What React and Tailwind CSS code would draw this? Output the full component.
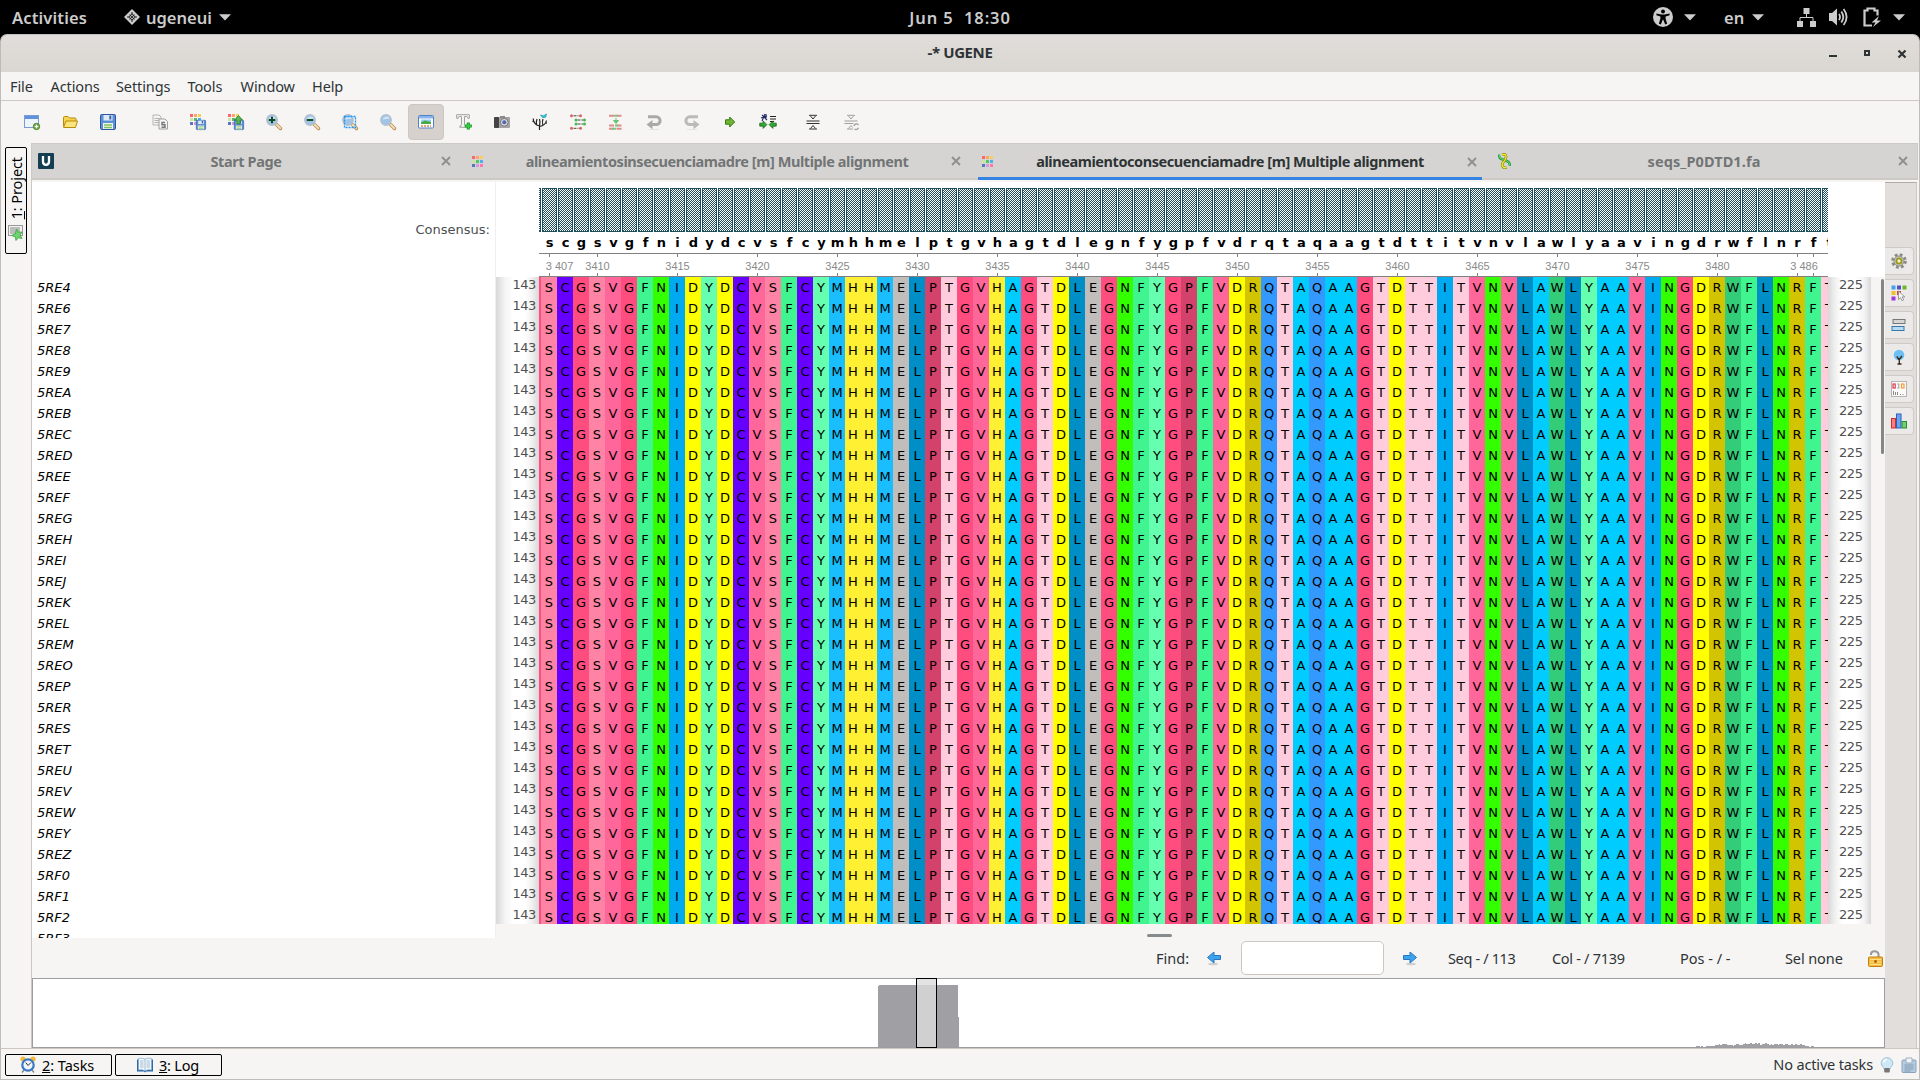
import React from "react";

const UI = "font-['Noto_Sans','Open_Sans',sans-serif]";
const MONO = "font-['DejaVu_Sans',sans-serif]";

const SEQ = "SCGSVGFNIDYDCVSFCYMHHMELPTGVHAGTDLEGNFYGPFVDRQTAQAAGTDTTITVNVLAWLYAAVINGDRWFLNRF".split("");
const NAMES = "5RE4 5RE6 5RE7 5RE8 5RE9 5REA 5REB 5REC 5RED 5REE 5REF 5REG 5REH 5REI 5REJ 5REK 5REL 5REM 5REO 5REP 5RER 5RES 5RET 5REU 5REV 5REW 5REY 5REZ 5RF0 5RF1 5RF2 5RF3".split(" ");
const ROWS = NAMES.slice(0, 31);

const COLORS = {
  S: "bg-[#ff83a4]", C: "bg-[#6600ff]", G: "bg-[#ff4d80]", V: "bg-[#ff6699]", F: "bg-[#40f490]",
  N: "bg-[#33ff00]", I: "bg-[#00aaf0]", D: "bg-[#ffff00]", Y: "bg-[#66ffb0]", M: "bg-[#1abeff]",
  H: "bg-[#fff033]", E: "bg-[#c0bdbb]", L: "bg-[#008ec7]", P: "bg-[#d2426b]", T: "bg-[#ffccdd]",
  A: "bg-[#00ccff]", R: "bg-[#d2c400]", Q: "bg-[#3399ff]", W: "bg-[#33cc78]",
};

function Caret() {
  return (
    <svg width="12" height="7" viewBox="0 0 12 7" className="shrink-0">
      <path d="M0 0.3h12L6 6.6z" fill="#ccc" />
    </svg>
  );
}

function TopBar() {
  return (
    <div className={`grid h-[34px] shrink-0 grid-cols-[1fr_auto_1fr] items-center bg-black text-[16.5px] leading-[30px] font-semibold text-[#ccc] ${UI}`}>
      <div className="flex items-center pl-3">
        <span className="w-[112px] pt-px tracking-[0.15px]">Activities</span>
        <svg width="16" height="16" viewBox="0 0 16 16">
          <path d="M8 0l8 8-8 8-8-8z" fill="#ccc" />
          <path d="M8 3.2v9.6M3.2 8h9.6M5.6 5.6l4.8 4.8M10.4 5.6l-4.8 4.8" stroke="#000" strokeWidth="1.1" />
          <path d="M8 5.2L10.8 8 8 10.8 5.2 8z" fill="#ccc" stroke="#000" strokeWidth=".7" />
          <circle cx="8" cy="8" r="1" fill="#000" />
        </svg>
        <span className="ml-1.5 w-[73px] pt-px tracking-[0px]">ugeneui</span>
        <Caret />
      </div>
      <span className="pt-px tracking-[0.9px] whitespace-pre">Jun 5  18:30</span>
      <div className="flex items-center justify-end pr-[15px]">
        <svg width="20" height="20" viewBox="0 0 20 20">
          <circle cx="10" cy="10" r="10" fill="#ccc" />
          <circle cx="10" cy="4.4" r="2" fill="#000" />
          <path d="M3.4 6.4l5 1h3.2l5-1v1.9l-4 1.1v2l1.5 5.4-1.9.6-1.9-4.7h-.6l-1.9 4.7-1.9-.6 1.5-5.4v-2l-4-1.1z" fill="#000" />
        </svg>
        <span className="w-[11px]" />
        <Caret />
        <span className="ml-[28px] w-[28px] pt-px">en</span>
        <Caret />
        <span className="w-[33px]" />
        <svg width="19" height="19" viewBox="0 0 19 19">
          <path d="M6.5 0h6v6h-6zM0 13h6v6H0zM13 13h6v6h-6z" fill="#ccc" />
          <path d="M9.5 6v4M3 13v-3.5h13V13" stroke="#ccc" fill="none" />
        </svg>
        <svg width="19" height="18" viewBox="0 0 19 18" className="ml-[13px]">
          <path d="M0 5h3l5-4.5v17L3 13H0z" fill="#ccc" />
          <path d="M10 6q2 3 0 6M12.3 3.5q4 5.500 0 11M14.600 1q6 8 0 16" stroke="#ccc" strokeWidth="1.8" fill="none" />
        </svg>
        <svg width="19" height="20" viewBox="0 0 19 20" className="ml-[15px]">
          <path d="M9 18.500H1.500v-15h3v-2h7v2h3v5" stroke="#ccc" strokeWidth="2.200" fill="none" />
          <path d="M16 9l-7.500 6.500h4L10 20l8-6.500h-4z" fill="#ccc" />
        </svg>
        <span className="w-[11px]" />
        <Caret />
      </div>
    </div>
  );
}

function TitleBar() {
  return (
    <div className="h-[38px] shrink-0 bg-black">
      <div className={`grid h-full grid-cols-[1fr_auto_1fr] items-center rounded-t-[7px] border border-b-0 border-t-[#c3bfbc] border-x-[#bfbab6] bg-linear-to-b from-[#e1dedb] to-[#dad6d1] text-[15px] font-bold text-[#2e3436] ${UI}`}>
        <span />
        <span className="pb-[3px] tracking-[-0.4px]">-* UGENE</span>
        <div className="flex items-center justify-end pr-[12px]">
          <svg width="78" height="10" viewBox="0 0 78 10" fill="none">
            <path d="M0 7h8" stroke="#2e3436" strokeWidth="2" />
            <path d="M36 2h4v4h-4z" stroke="#2e3436" strokeWidth="2" />
            <path d="M69.500 1.500l7 7m0-7l-7 7" stroke="#2e3436" strokeWidth="2.200" />
          </svg>
        </div>
      </div>
    </div>
  );
}

function MenuBar() {
  const items = [["File", "w-[40.500px]"], ["Actions", "w-[65.500px]"], ["Settings", "w-[71.500px]"], ["Tools", "w-[53px]"], ["Window", "w-[71.500px]"], ["Help", "w-[60px]"]];
  return (
    <div className={`flex h-[29px] shrink-0 items-center border-b border-[#cdc9c5] pt-[2px] pl-[9px] text-[14.5px] text-[#2e3436] ${UI}`}>
      {items.map(([t, w]) => <span key={t} className={`${w} tracking-[-0.1px]`}>{t}</span>)}
    </div>
  );
}

const DOTS = [["#ff6666", "#ffa566", "#f0d060"], ["#c8e6a0", "#50c870", "#55aaee"], ["#5577bb", "#d699dd", "#ff77b0"]];
function DotGrid() {
  return (
    <svg width="11" height="11" viewBox="0 0 11 11" className="mr-px shrink-0" shapeRendering="crispEdges">
      {DOTS.map((r, y) => r.map((c, x) => <rect key={x + "-" + y} x={x * 4} y={y * 4} width="3" height="3" fill={c} />))}
    </svg>
  );
}

function Floppy() {
  return (
    <g>
      <rect x=".5" y=".5" width="15" height="15" rx="1.200" fill="#5b8fd6" stroke="#2c56a0" />
      <rect x="3.500" y="1" width="9" height="5.500" fill="#dfe9f7" />
      <rect x="9.300" y="1.500" width="2" height="4" fill="#3b66ac" />
      <rect x="3" y="9" width="10" height="6" fill="#f2f6ea" />
      <path d="M4 11h8M4 13.500h8" stroke="#7fc060" strokeWidth="1.300" />
    </g>
  );
}

function Lens({ children }) {
  return (
    <g>
      <path d="M10.500 10.500l4 4" stroke="#b58a50" strokeWidth="3.400" strokeLinecap="round" />
      <path d="M10.800 10.800l3.500 3.500" stroke="#f2dcb4" strokeWidth="2" strokeLinecap="round" />
      <circle cx="6" cy="6" r="5.300" fill="#a3c3e6" stroke="#b4c0cc" strokeWidth="1.200" />
      <path d="M2.500 5.500a4 3.500 0 0 1 7.500-1z" fill="#d4e4f5" />
      {children}
    </g>
  );
}

function Dots4() {
  return (
    <g fill="#5cb870">
      <rect width="3" height="3" fill="#ff6666" /><rect x="4" width="3" height="3" fill="#ffa566" /><rect x="8" width="3" height="3" fill="#f0d060" />
      <rect y="4" width="3" height="3" fill="#c8e6a0" /><rect x="4" y="4" width="3" height="3" /><rect x="8" y="4" width="3" height="3" fill="#55aaee" />
      <rect y="8" width="3" height="3" fill="#5577bb" /><rect x="4" y="8" width="3" height="3" fill="#d699dd" />
    </g>
  );
}

function TurnArrow({ color }) {
  return (
    <g>
      <path d="M2 2.800h8.200a3.900 3.900 0 0 1 0 7.800H6" fill="none" stroke={color} strokeWidth="3" />
      <path d="M6.500 6L.5 10.600l6 4.600z" fill={color} />
      <path d="M3 15.500h10" stroke="#e2e2e2" />
    </g>
  );
}

const ARROW_R = "M1 5.500h4.500V2.500l5 5-5 5v-3H1z";

const ICONS = {
  newProject: <g><rect x=".5" y="1.500" width="14" height="12" fill="#eef4fc" stroke="#7a9ad0" /><rect x="1" y="2" width="13" height="3" fill="#5e92dc" /><circle cx="12.500" cy="12.500" r="3.200" fill="#7ab050" stroke="#3e7a1e" strokeWidth=".8" /><path d="M12.500 10.800v3.400M10.800 12.500h3.400" stroke="#fff" strokeWidth="1.200" /></g>,
  open: <g stroke="#b88a0a" strokeLinejoin="round"><path d="M1.500 12V3.500q0-1 1-1h3.500l1.500 1.500h5.500q1 0 1 1V8" fill="#f5d44e" /><path d="M1.500 13.500L4 7h11.500l-2 6.500z" fill="#fbe47c" /></g>,
  save: <Floppy />,
  copy: <g fill="#f4f4f4" stroke="#b4b4b4"><path d="M1 1h6l2 2v8H1z" /><path d="M2.500 4.500h5M2.500 6.500h5M2.500 8.500h5" /><path d="M7 5h6l2.500 2.500V15H7z" stroke="#a0a0a0" /><path d="M13 8.500h-3v2.300h3v2.400h-3.500" fill="none" stroke="#777" strokeWidth="1.400" /></g>,
  saveAln: <g><Dots4 /><g transform="translate(6 6) scale(.62)"><Floppy /></g></g>,
  saveAlnAs: <g><Dots4 /><g transform="translate(6 6) scale(.62)"><Floppy /></g><path d="M10.500 1.500l4 4.500h-2.300v4H8.800V6H6.500z" fill="#57b557" stroke="#2b7d2b" strokeWidth=".8" /></g>,
  zoomIn: <Lens><path d="M6 2.800v6.400M2.800 6h6.400" stroke="#0e4d1c" strokeWidth="2" /></Lens>,
  zoomOut: <Lens><path d="M2.800 6h6.400" stroke="#0e4d1c" strokeWidth="2" /></Lens>,
  zoomSel: <Lens><rect x="2.500" y="2.500" width="11" height="11" fill="none" stroke="#1c97f5" strokeWidth="1.300" strokeDasharray="2 1" /></Lens>,
  zoomReset: <Lens />,
  overview: <g><rect x=".5" y="1.500" width="15" height="12.500" rx="1" fill="#fff" stroke="#4f82cc" /><rect x="1" y="2" width="14" height="2.500" fill="#8ab4ea" /><rect x="3" y="5.500" width="10" height="4.500" fill="#8ecdf5" /><path d="M3 10V8.500l4-2 6 1.500v2z" fill="#49a842" /><path d="M3 12h10" stroke="#d88850" strokeWidth="1.300" strokeDasharray="2 1" /></g>,
  text: <g><path d="M.7.700h12.600v3.600h-1.500q0-1.800-1.500-1.800H8.500v8q0 1.500 1.700 1.500v1.300H3.800V12q1.700 0 1.700-1.500v-8H3.700q-1.500 0-1.500 1.800H.7z" fill="#f4f4f4" stroke="#a0a0a0" /><path d="M12.300 8.500v7M8.800 12h7" stroke="#129a20" strokeWidth="3" /><path d="M12.300 9.300v5.400M9.600 12h5.400" stroke="#36d040" strokeWidth="1.400" /></g>,
  camera: <g><rect y="3" width="16" height="11" rx="1" fill="#a4a4a4" /><rect y="3" width="5" height="11" rx="1" fill="#444" /><rect x="6" y="2" width="5" height="2" fill="#8a8a8a" /><circle cx="10.300" cy="8.300" r="3.900" fill="#d5d5e0" stroke="#777" /><circle cx="10.300" cy="8.300" r="2" fill="#4e68a8" /></g>,
  tree: <g fill="none" stroke="#222" strokeWidth="1.200"><path d="M7.500 16v-4Q1.500 10.500 1.200 4.500M7.500 12.500q6-1 7-6M4.500 10.500Q4 8 5 5M2 8L.5 7M7.500 12Q8.500 8 7.500 5M10.800 11Q10 7 11 5M12.500 9.500l2.500-.5" /><path d="M8.500 1l3 .8L14.500 0l-.8 3.200-3 .6z" fill="#2bd3dc" stroke="#168a96" strokeWidth=".6" /></g>,
  align: <g><path d="M3.500 1.800h5M7.500 6h5.500M7.500 10h5.500M3.500 14.300h5" stroke="#444" strokeWidth="1" strokeDasharray="3 1" /><g fill="#d8645c"><circle cx="1.500" cy="1.800" r="1.500" /><circle cx="10.500" cy="1.800" r="1.500" /><circle cx="1.500" cy="14.300" r="1.500" /><circle cx="10.500" cy="14.300" r="1.500" /></g><g fill="#45b84f"><circle cx="6" cy="6" r="1.500" /><circle cx="14.500" cy="6" r="1.500" /><circle cx="6" cy="10" r="1.500" /><circle cx="14.500" cy="10" r="1.500" /></g></g>,
  alignTo: <g><path d="M1 1.800h14M1 11.500h14M1 14.800h14" stroke="#e08c8c" strokeWidth="2" strokeDasharray="5 2.500" /><path d="M6 1.800h3M7 11.500h3M4 14.800h4" stroke="#79c97f" strokeWidth="2" /><path d="M8 4v3M5.500 6.500h5L8 9.500z" fill="#6ac574" stroke="#6ac574" /></g>,
  undo: <TurnArrow color="#a9a9a9" />,
  redo: <g transform="matrix(-1 0 0 1 16 0)"><TurnArrow color="#bababa" /></g>,
  go: <path d="M3.500 5.800h4.200V3l5 5-5 5v-2.800H3.500z" fill="#6fb534" stroke="#3a7d12" />,
  realign: <g><path d="M5 0L2 7M1 4l6-2M2 1l5 5M6 0v4" stroke="#222a66" strokeWidth="1.100" /><path d="M10 2.500h6M10 5h6M10 7.500h4" stroke="#222" strokeWidth="1" /><path d={ARROW_R} transform="translate(-1 5) scale(.75)" fill="#36a836" stroke="#145f14" /><path d={ARROW_R} transform="matrix(-.75 0 0 .75 17 5)" fill="#36a836" stroke="#145f14" /></g>,
  collapse: <g stroke="#333" fill="none"><path d="M1.500 7h13M1.500 9.500h13" strokeWidth="1.100" /><path d="M4 1.300h8M4 15h8M5.500 2l2.500 3L10.500 2M5.500 14.500L8 11.500l2.500 3" /></g>,
  collapseUpd: <g stroke="#a0a0a0" fill="none"><path d="M1.500 7h13M1.500 9.500h9" strokeWidth="1.100" /><path d="M4 1.300h8M4 15h6M5.500 2l2.500 3L10.500 2M5.500 14.500L8 11.500l1.500 2" /><path d="M15.500 11a2.500 2.500 0 0 0-4.500 1M11.500 15a2.500 2.500 0 0 0 4-1.200" strokeWidth="1.300" /></g>,
};

function ToolIcon({ name, checked }) {
  return (
    <div className="flex w-[38px] justify-center">
      <div className={checked ? "flex size-9 items-center justify-center rounded-[4px] border border-[#cdc7c2] bg-[#d6d1cd]" : "flex size-9 items-center justify-center"}>
        <svg width="16" height="16" viewBox="0 0 16 16" fill="none" className="overflow-visible">{ICONS[name]}</svg>
      </div>
    </div>
  );
}

function ToolBar() {
  return (
    <div className="flex h-[42px] shrink-0 items-center pl-3">
      {["newProject", "open", "save"].map((n) => <ToolIcon key={n} name={n} />)}
      <span className="w-[14px]" />
      {["copy", "saveAln", "saveAlnAs", "zoomIn", "zoomOut", "zoomSel", "zoomReset", "overview", "text", "camera", "tree", "align", "alignTo", "undo", "redo", "go", "realign"].map((n) => (
        <ToolIcon key={n} name={n} checked={n === "overview"} />
      ))}
      <span className="w-[7px]" />
      {["collapse", "collapseUpd"].map((n) => <ToolIcon key={n} name={n} />)}
    </div>
  );
}

function Close() {
  return (
    <svg width="10" height="10" viewBox="0 0 10 10" className="shrink-0">
      <path d="M1 1l8 8M9 1L1 9" stroke="#8d9091" strokeWidth="1.900" />
    </svg>
  );
}

function Tabs() {
  return (
    <div className={`flex h-[37px] shrink-0 border border-b-2 border-[#cdc9c5] bg-[#d6d4d2] text-[14.5px] font-bold text-[#727576] ${UI}`}>
      <div className="flex w-[436px] items-center pr-[17px] pl-[6px]">
        <svg width="16" height="16" viewBox="0 0 16 16">
          <rect width="16" height="16" rx="1" fill="#143f52" />
          <path d="M5 3v5.500q0 3.300 3 3.300t3-3.300V3" fill="none" stroke="#fff" strokeWidth="2.300" />
        </svg>
        <span className="flex-1 pt-[2px] pr-[3px] text-center tracking-[-0.4px]">Start Page</span>
        <Close />
      </div>
      <div className="flex w-[510px] items-center pr-[17px] pl-[4px]">
        <DotGrid />
        <span className="flex-1 pt-[2px] pr-px text-center tracking-[-0.43px] whitespace-nowrap">alineamientosinsecuenciamadre [m] Multiple alignment</span>
        <Close />
      </div>
      <div className="flex h-[36px] w-[504px] items-center border-b-3 border-[#3584e4] pt-[2px] pr-[5px] pl-1 text-[#2e3436]">
        <DotGrid />
        <span className="flex-1 pr-px text-center tracking-[-0.43px] whitespace-nowrap">alineamientoconsecuenciamadre [m] Multiple alignment</span>
        <Close />
      </div>
      <div className="flex flex-1 items-center pr-[9px] pl-[16px]">
        <svg width="13" height="16" viewBox="0 0 13 16" fill="none">
          <path d="M1 1.500Q1 6 5 6.500l4 1.500q3 1 3 5" stroke="#27963a" strokeWidth="2.400" />
          <path d="M1 1.500Q1 6 5 6.500l4 1.500q3 1 3 5" stroke="#5fe070" strokeWidth="1" />
          <path d="M4 1.500q4.500-1 4 2.500T5.500 9t-1 4 4 1.500" stroke="#8d8a10" strokeWidth="2.600" />
          <path d="M4 1.500q4.500-1 4 2.500T5.500 9t-1 4 4 1.500" stroke="#f0ea28" strokeWidth="1.300" />
        </svg>
        <span className="flex-1 pt-[2px] pr-px text-center tracking-[0.1px]">seqs_P0DTD1.fa</span>
        <Close />
      </div>
    </div>
  );
}

function NameColumn() {
  return (
    <div className="flex h-[756px] w-[464px] shrink-0 flex-col overflow-hidden border-r border-[#f0efee] bg-white">
      <div className={`flex h-[95px] shrink-0 items-center justify-end pr-[5px] text-[13px] text-[#4a4f51] ${MONO}`}>Consensus:</div>
      {NAMES.map((n) => (
        <div key={n} className={`h-[21px] shrink-0 pl-[5px] text-[13px] leading-[21px] text-black italic ${MONO}`}>{n}</div>
      ))}
    </div>
  );
}

function Ruler() {
  const label = (i) => {
    const n = 3407 + i;
    if (i === 0) return "3 407";
    if (i === 79) return "3 486";
    if (n % 5 === 0 && n !== 3485) return String(n);
    return "";
  };
  return (
    <div className="flex h-[24px] border-y border-[#808080] pl-[2.500px] font-['Liberation_Sans',sans-serif] text-[11px] text-[#8a8a8a]">
      {SEQ.map((_, i) => {
        const l = label(i);
        const shift = i === 0 ? "pl-[20px]" : i === 79 ? "pr-[19px]" : "";
        return (
          <div key={i} className="flex w-4 shrink-0 flex-col items-center justify-between">
            <span className={l || i === 78 ? "h-[3px] w-px bg-[#808080]" : "h-[3px] w-px"} />
            <span className={`flex h-4 w-0 items-center justify-center pt-[2px] leading-none whitespace-nowrap ${shift}`}>{l}</span>
            <span className={l || i === 78 ? "h-[3px] w-px bg-[#808080]" : "h-[3px] w-px"} />
          </div>
        );
      })}
    </div>
  );
}

const BAR = "h-[44px] border border-[#1f4e5c] bg-[repeating-conic-gradient(#1f4e5c_0_25%,#ffffff_0_50%)] bg-[length:2px_2px]";

function AlignmentView() {
  return (
    <div className="flex w-[1389px] flex-col">
      <div className="flex h-[95px] bg-white pl-[43px]">
        <div className="w-[1289px] overflow-hidden pt-[6px]">
          <div className="flex">
            <div className={`${BAR} w-[2px] shrink-0 border-l-0`} />
            {SEQ.map((_, i) => <div key={i} className={`${BAR} ml-px w-[15px] shrink-0`} />)}
            <div className={`${BAR} ml-px w-[15px] shrink-0`} />
          </div>
          <div className={`flex h-[21px] pl-[2.500px] text-[13px] leading-[21px] font-bold text-black ${MONO}`}>
            {[...SEQ, "T"].map((c, i) => <span key={i} className="flex w-4 shrink-0 justify-center">{c.toLowerCase()}</span>)}
          </div>
          <Ruler />
        </div>
      </div>
      <div className="flex h-[647px]">
        <div className={`h-full w-[43px] overflow-hidden bg-[linear-gradient(to_right,#d8d8d8_0,#f4f4f4_9px,#fff_17px,#fff_29px,#f0f0f0_36px,#d8d8d8_43px)] pr-[3px] text-right text-[13px] text-[#505050] ${MONO}`}>
          {ROWS.map((n) => <div key={n} className="h-[21px] leading-[15px] tracking-[-0.4px]">143</div>)}
        </div>
        <div className={`h-full w-[1289px] overflow-hidden text-[13px] leading-[21px] text-black ${MONO}`}>
          {ROWS.map((n) => (
            <div key={n} className="flex">
              <span className="h-[21px] w-[2px] shrink-0 bg-[#ff4d80]" />
              {[...SEQ, "T"].map((c, i) => (
                <span key={i} className={`flex h-[21px] w-4 shrink-0 justify-center ${COLORS[c]}`}>{c}</span>
              ))}
            </div>
          ))}
        </div>
        <div className={`h-full w-[43px] overflow-hidden bg-[linear-gradient(to_right,#d8d8d8_0,#f0f0f0_7px,#fff_14px,#fff_28px,#f4f4f4_36px,#d8d8d8_43px)] pl-[11px] text-[13px] text-[#505050] ${MONO}`}>
          {ROWS.map((n) => <div key={n} className="h-[21px] leading-[15px] tracking-[-0.4px]">225</div>)}
        </div>
        <div className="flex flex-1 justify-end pt-[2px] pr-px">
          <div className="h-[175px] w-[3px] rounded-full bg-[#868686]" />
        </div>
      </div>
      <div className="flex h-[14px] justify-center pt-[10px] pr-[63px]">
        <div className="h-[3px] w-[25px] rounded-full bg-[#868a8c]" />
      </div>
    </div>
  );
}

function BlueArrow({ flip }) {
  return (
    <svg width="16" height="16" viewBox="0 0 16 16" className={flip ? "shrink-0 -scale-x-100" : "shrink-0"}>
      <ellipse cx="9" cy="14" rx="5" ry="1.300" fill="#d0d0d0" />
      <path d="M1.500 5.500h6.500V2l6.500 5.500L8 13V9.500H1.500z" fill="#3fa3ec" stroke="#2278c4" />
    </svg>
  );
}

function FindBar() {
  return (
    <div className={`flex h-10 shrink-0 items-center pl-[1124px] text-[14.5px] text-[#2e3436] ${UI}`}>
      <span className="w-[50px] pt-px">Find:</span>
      <BlueArrow flip />
      <div className="ml-[19px] h-[34px] w-[143px] rounded-[5px] border border-[#cdc7c2] bg-white" />
      <span className="w-[18px]" />
      <BlueArrow />
      <span className="ml-[30px] w-[104px] pt-px tracking-[-0.35px]">Seq - / 113</span>
      <span className="w-[128px] pt-px tracking-[-0.3px]">Col - / 7139</span>
      <span className="w-[105px] pt-px">Pos - / -</span>
      <span className="w-[83px] pt-px tracking-[-0.1px]">Sel none</span>
      <svg width="15" height="17" viewBox="0 0 15 17" className="shrink-0">
        <path d="M3 5V4q0-2.800 3.500-2.800T10.500 4v3" fill="none" stroke="#999" strokeWidth="2" />
        <rect x=".5" y="7" width="14" height="9.500" rx="1" fill="#f5bb3c" stroke="#c47e12" />
        <path d="M2 9.500h11M2 12h11M2 14.500h11" stroke="#ffe08a" strokeWidth="1" />
        <circle cx="7.500" cy="11.500" r="1.400" fill="#a8640c" />
      </svg>
    </div>
  );
}

const NOISE = [1, 1, 0, 1, 0, 0, 1, 1, 1, 1, 1, 2, 2, 3, 2, 3, 3, 3, 2, 2, 2, 1, 2, 3, 3, 2, 2, 3, 4, 3, 3, 4, 3, 3, 4, 3, 4, 2, 3, 3, 4, 3, 2, 3, 2, 3, 3, 2, 3, 3, 2, 3, 3, 2, 2, 3, 2, 3, 2, 2, 3, 2, 2, 1, 1, 0, 1, 1];

function Overview() {
  return (
    <div className="relative flex h-[70px] shrink-0 items-end border border-[#9d9ca0] bg-white pl-[845px]">
      <svg width="81" height="62" viewBox="0 0 81 62" shapeRendering="crispEdges">
        <path d="M0 1h1V0h79v32h1v30H0z" fill="#a09fa3" />
      </svg>
      <svg width="118" height="5" viewBox="0 0 118 5" className="ml-[737px]" shapeRendering="crispEdges">
        {NOISE.map((h, i) => <rect key={i} x={(i * 118) / NOISE.length} y={5 - h} width="1.800" height={h} fill="#a09fa3" />)}
      </svg>
      <div className="absolute -top-px left-[883px] h-[70px] w-[21px] border border-black bg-[#dcdcdc]/80" />
    </div>
  );
}

const SIDE = {
  gear: <g><circle cx="8" cy="8" r="6.300" fill="none" stroke="#8a8a84" strokeWidth="3" strokeDasharray="2.700 2.250" /><circle cx="8" cy="8" r="5" fill="#c9c9c2" stroke="#8d8d86" /><circle cx="8" cy="8" r="2.600" fill="#f0f0d0" stroke="#9a9a1a" strokeWidth="1.800" /></g>,
  select: <g><rect x=".5" y=".5" width="4" height="4" fill="#44a0e8" /><rect x="6" y=".5" width="4" height="4" fill="#5050c8" /><rect x="11.500" y=".5" width="4" height="4" fill="#6cb52c" /><rect x=".5" y="6" width="4" height="4" fill="#eec22e" /><rect x="6" y="6" width="4" height="4" fill="#e0442e" /><rect x=".5" y="11.500" width="4" height="4" fill="#a438d6" /><path d="M7.500 6v8.500l2-1.800 1.500 3 1.700-.8-1.500-3h2.600z" fill="#f4f4f4" stroke="#888" strokeWidth=".8" /></g>,
  pair: <g><rect x="2" y="2.500" width="12" height="4" fill="#d6d6d6" stroke="#777" /><rect x="1" y="9.500" width="12" height="4" fill="#b4dcf5" stroke="#3b78a8" /></g>,
  tree: <g><circle cx="8" cy="6" r="5.300" fill="#6cc0f4" /><path d="M8.300 15V9M8.300 11L5.800 7.500M8.500 10l2.500-3M6.500 15h4" stroke="#3b2414" strokeWidth="1.300" fill="none" /></g>,
  list: <g><rect x=".5" y=".5" width="15" height="15" fill="#fafafa" stroke="#b4b4b4" /><g fill="none" strokeWidth="1.200"><rect x="2" y="3" width="2.200" height="4" stroke="#e03a50" /><path d="M6 3h1.800v4H6" stroke="#aaa" /><rect x="10.500" y="3" width="2.500" height="4" stroke="#f0a030" /></g><path d="M2.500 10v4M4.500 11v3M6.500 11v3M9 13.500h1M11.500 13.500h1" stroke="#888" strokeWidth="1" /></g>,
  bars: <g><rect x=".5" y="5.500" width="4" height="9.500" fill="#f58080" stroke="#c83030" /><rect x="5.500" y="1" width="4.500" height="14" fill="#6ca4f0" stroke="#2860c0" /><rect x="11" y="8.500" width="4.500" height="6.500" fill="#74cc74" stroke="#289028" /></g>,
};

function Sidebar() {
  return (
    <div className="flex w-8 shrink-0 flex-col gap-[4px] border-t border-r border-t-[#b5aea8] border-r-[#cdc7c2] bg-[#e1dedb] pt-[64px]">
      {Object.keys(SIDE).map((k) => (
        <div key={k} className="flex h-[28px] w-[29px] items-center justify-center rounded-r-[4px] border border-l-0 border-[#cfcac6] bg-[#eceae8]">
          <svg width="16" height="16" viewBox="0 0 16 16">{SIDE[k]}</svg>
        </div>
      ))}
    </div>
  );
}

function LeftDock() {
  return (
    <div className="w-[30px] shrink-0 pt-1 pl-1">
      <div className={`flex h-[107px] w-[22px] flex-col items-center justify-end rounded-[2px] border border-black pb-[12px] text-[14.5px] text-black ${UI}`}>
        <span className="rotate-180 leading-[20px] tracking-[-0.1px] whitespace-nowrap [writing-mode:vertical-rl]"><span className="underline">1</span>: Project</span>
        <svg width="16" height="16" viewBox="0 0 16 16" className="mt-[6px] shrink-0">
          <rect x=".5" y=".5" width="14" height="10" fill="#f2f2f2" stroke="#999" />
          <path d="M3 2v7M5 2v7M7 2v7M9 2v7M11 2v7" stroke="#888" />
          <path d="M8.500 4l1.800 3.200 4-.2-2.300 3 2 3.500-3.700-.8L8 15.500l-.7-3.600L3.500 10.500l3.800-1.500z" fill="#6fd46f" stroke="#3ba53b" strokeWidth=".8" />
        </svg>
      </div>
    </div>
  );
}

function StatusBar() {
  return (
    <div className={`flex h-[30px] shrink-0 items-center pt-px pr-[2px] pl-1 text-[14.5px] text-[#2e3436] ${UI}`}>
      <div className="flex h-[22px] w-[107px] items-center rounded-[2px] border border-black pl-[14px] text-black">
        <svg width="16" height="17" viewBox="0 0 16 17">
          <path d="M4 14l-2 2.500M12 14l2 2.500" stroke="#888" strokeWidth="1.500" />
          <circle cx="3" cy="3" r="2.600" fill="#f5b836" /><circle cx="13" cy="3" r="2.600" fill="#f5b836" />
          <circle cx="8" cy="9" r="5.700" fill="#eef5fc" stroke="#3a78c4" strokeWidth="2.200" />
          <path d="M5.800 6.500L8 9.500l3-3" stroke="#333" fill="none" />
        </svg>
        <span className="ml-[6px] leading-5 tracking-[-0.05px]"><span className="underline">2</span>: Tasks</span>
      </div>
      <div className="ml-[3px] flex h-[22px] w-[107px] items-center rounded-[2px] border border-black pl-[21px] text-black">
        <svg width="16" height="16" viewBox="0 0 16 16">
          <path d="M0 2.500h16v12H9l-1 1-1-1H0z" fill="#2a68a8" />
          <path d="M1.500 1.500Q5 .5 8 2.200 11 .500 14.500 1.500V13Q11 12 8 13.800 5 12 1.500 13z" fill="#f2f7fc" stroke="#7fa8d0" strokeWidth=".7" />
          <path d="M8 2.200v11.600M3 4h3.500M3 6h3.500M3 8h3.500M3 10h3.500M9.500 4H13M9.500 6H13M9.500 8H13M9.500 10H13" stroke="#9ab4cc" strokeWidth=".9" />
        </svg>
        <span className="ml-[6px] leading-5 tracking-[-0.2px]"><span className="underline">3</span>: Log</span>
      </div>
      <span className="flex-1 pr-[6px] text-right tracking-[-0.15px]">No active tasks</span>
      <svg width="16" height="16" viewBox="0 0 16 16">
        <path d="M8 .7a5.800 5.800 0 0 1 5.800 5.500c0 2.800-2.800 3.800-3.100 6.300H5.300C5 10 2.200 9 2.200 6.200A5.800 5.800 0 0 1 8 .7z" fill="#cfe8f6" stroke="#9cc0d4" />
        <rect x="5.200" y="11" width="5.600" height="4.500" rx="1" fill="#777" />
        <path d="M4.500 5.500A3.500 3.500 0 0 1 8 2.500" stroke="#fff" strokeWidth="1.400" fill="none" />
      </svg>
      <svg width="16" height="16" viewBox="0 0 16 16" className="ml-[6px]">
        <rect x="1" y="3" width="14" height="12.500" rx="1" fill="#b4cbe0" stroke="#8aa4bd" />
        <path d="M5 1h6v5H5z" fill="#eef3f7" stroke="#9db0c2" />
        <path d="M3.500 8h9M3.500 10h9M3.500 12h9M3.500 14h6" stroke="#7f95ad" strokeWidth=".9" />
      </svg>
    </div>
  );
}

export default function App() {
  return (
    <div className="flex h-[1080px] w-[1920px] flex-col overflow-hidden bg-[#f6f5f4]">
      <TopBar />
      <TitleBar />
      <div className="flex flex-1 flex-col border border-t-0 border-[#bfbdba]">
        <MenuBar />
        <ToolBar />
        <div className="flex h-[906px] shrink-0 border-b border-[#cdc7c2]">
          <LeftDock />
          <div className="flex w-[1887px] flex-col">
            <Tabs />
            <div className="flex h-[868px]">
              <div className="flex w-[1854px] flex-col border-l border-[#cdc7c2] pt-[2px]">
                <div className="flex">
                  <NameColumn />
                  <AlignmentView />
                </div>
                <FindBar />
                <Overview />
              </div>
              <div className="flex pt-[2px]">
                <Sidebar />
              </div>
            </div>
          </div>
        </div>
        <StatusBar />
      </div>
    </div>
  );
}
